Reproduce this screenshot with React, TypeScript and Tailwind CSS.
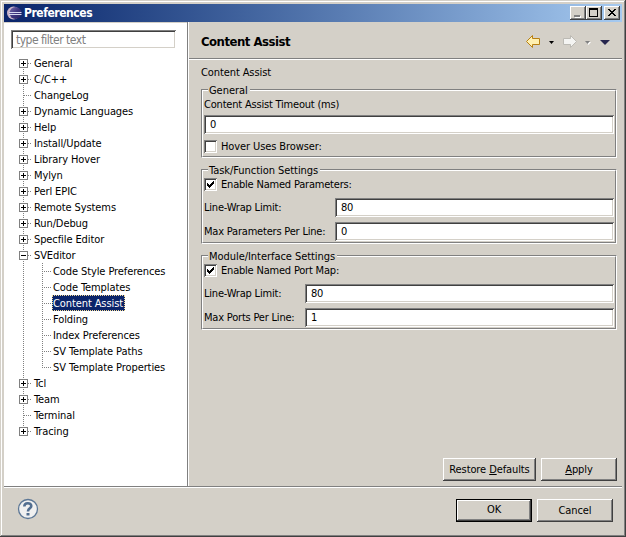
import type { ReactNode } from "react";

const raised =
  "bg-[#d4d0c8] shadow-[inset_-1px_-1px_#404040,inset_1px_1px_#ffffff,inset_-2px_-2px_#808080]";
const sunken =
  "bg-white shadow-[inset_1px_1px_#808080,inset_-1px_-1px_#ffffff,inset_2px_2px_#404040,inset_-2px_-2px_#d4d0c8]";

type Node = { label: string; state?: "plus" | "minus"; child?: boolean; selected?: boolean };

const nodes: Node[] = [
  { label: "General", state: "plus" },
  { label: "C/C++", state: "plus" },
  { label: "ChangeLog" },
  { label: "Dynamic Languages", state: "plus" },
  { label: "Help", state: "plus" },
  { label: "Install/Update", state: "plus" },
  { label: "Library Hover", state: "plus" },
  { label: "Mylyn", state: "plus" },
  { label: "Perl EPIC", state: "plus" },
  { label: "Remote Systems", state: "plus" },
  { label: "Run/Debug", state: "plus" },
  { label: "Specfile Editor", state: "plus" },
  { label: "SVEditor", state: "minus" },
  { label: "Code Style Preferences", child: true },
  { label: "Code Templates", child: true },
  { label: "Content Assist", child: true, selected: true },
  { label: "Folding", child: true },
  { label: "Index Preferences", child: true },
  { label: "SV Template Paths", child: true },
  { label: "SV Template Properties", child: true },
  { label: "Tcl", state: "plus" },
  { label: "Team", state: "plus" },
  { label: "Terminal" },
  { label: "Tracing", state: "plus" },
];

function Branch({ node, first, last, lastChild }: { node: Node; first: boolean; last: boolean; lastChild: boolean }) {
  return (
    <svg width={node.child ? 33 : 15} height="16" className="shrink-0" shapeRendering="crispEdges" stroke="#808080" fill="none">
      <path d={`M4.500 ${first ? 8 : 0}V${last ? 8 : 16}`} strokeDasharray="1 1" />
      {node.child ? (
        <path d={`M23.500 0V${lastChild ? 9 : 16}M23 8.500H32`} strokeDasharray="1 1" />
      ) : (
        <path d="M5 8.500H13" strokeDasharray="1 1" />
      )}
      {node.state && <rect x="0.5" y="4.5" width="8" height="8" fill="#fff" />}
      {node.state && <path d={node.state === "plus" ? "M2 8.500H7M4.500 6V11" : "M2 8.500H7"} stroke="#000" />}
    </svg>
  );
}

function Field({ value, className = "" }: { value: string; className?: string }) {
  return <div className={`flex h-[19px] items-center pt-[2px] pl-[6px] ${sunken} ${className}`}>{value}</div>;
}

function Check({ label, on = false }: { label: string; on?: boolean }) {
  return (
    <div className="flex h-[13px] items-center gap-[4px]">
      <span className={`h-[13px] w-[13px] ${sunken}`}>
        {on && (
          <svg width="13" height="13" shapeRendering="crispEdges">
            <path d="M3 5h1v1h1v1h1v-1h1v-1h1v-1h1v-1h1v3h-1v1h-1v1h-1v1h-1v1h-1v-1h-1v-1h-1z" />
          </svg>
        )}
      </span>
      <span className="pt-[2px]">{label}</span>
    </div>
  );
}

function Row({ label, value, labelWidth }: { label: string; value: string; labelWidth: string }) {
  return (
    <div className="flex items-center">
      <span className={`pt-[2px] ${labelWidth}`}>{label}</span>
      <Field value={value} className="flex-1" />
    </div>
  );
}

function Group({ title, className = "", children }: { title: string; className?: string; children: ReactNode }) {
  return (
    <section className={`relative w-[416px] border border-t-[#808080] border-l-[#808080] border-r-white border-b-white ${className}`}>
      <div className="h-full border border-t-white border-l-white border-r-[#808080] border-b-[#808080] pr-px pl-px tracking-[-0.2px]">
        {children}
      </div>
      <h3 className="absolute -top-[6px] left-[6px] h-[14px] bg-[#d4d0c8] pr-[2px] pl-px leading-[14px] tracking-[-0.05px]">{title}</h3>
    </section>
  );
}

function Button({ children, primary = false, className = "" }: { children: ReactNode; primary?: boolean; className?: string }) {
  return (
    <button className={`h-[23px] ${primary ? "border border-black" : "pt-px"} ${raised} ${className}`}>{children}</button>
  );
}

export default function App() {
  return (
    <div className="flex h-[537px] w-[626px] flex-col bg-[#d4d0c8] p-[4px] font-['DejaVu_Sans_Condensed','DejaVu_Sans',sans-serif] text-[11px] tracking-[-0.1px] whitespace-nowrap text-black shadow-[inset_-1px_-1px_#404040,inset_1px_1px_#d4d0c8,inset_-2px_-2px_#808080,inset_2px_2px_#ffffff]">
      <header className="flex h-[18px] shrink-0 items-center bg-linear-to-r from-[#0a246a] to-[#a6caf0] pr-[2px] pl-[3px]">
        <svg width="15" height="14" viewBox="0 0 15 14">
          <defs>
            <linearGradient id="sphere" x1="0" y1="0" x2="1" y2="1">
              <stop offset="0" stopColor="#7a70ae" />
              <stop offset="0.5" stopColor="#3d3580" />
              <stop offset="1" stopColor="#262260" />
            </linearGradient>
          </defs>
          <circle cx="6.500" cy="7" r="6.500" fill="#c9b3c8" />
          <circle cx="8.500" cy="7" r="6" fill="url(#sphere)" />
          <path d="M2 6.500H14.500M2 8.500H14.500" stroke="#d5d9f0" />
        </svg>
        <h1 className="ml-[2px] flex-1 text-[12px] font-bold tracking-[-0.45px] text-white">Preferences</h1>
        <div className="flex">
          <span className={`h-[14px] w-[16px] ${raised}`}>
            <svg width="16" height="14" shapeRendering="crispEdges"><path d="M5 10h6v2h-6z" fill="#fff" /><path d="M4 9h6v2h-6z" fill="#808080" /></svg>
          </span>
          <span className={`h-[14px] w-[16px] ${raised}`}>
            <svg width="16" height="14" shapeRendering="crispEdges"><path d="M3 2h9v9h-9zM4 4v6h7v-6z" fillRule="evenodd" /></svg>
          </span>
          <span className={`ml-[2px] h-[14px] w-[16px] ${raised}`}>
            <svg width="16" height="14" shapeRendering="crispEdges"><path d="M4 3h2v1h1v1h2v-1h1v-1h2v1h-1v1h-1v1h-1v1h1v1h1v1h1v1h-2v-1h-1v-1h-2v1h-1v1h-2v-1h1v-1h1v-1h1v-1h-1v-1h-1v-1h-1z" /></svg>
          </span>
        </div>
      </header>

      <main className="flex h-[464px] shrink-0">
        <aside className="w-[183px] border-t border-[#d4d0c8] bg-white pt-[7px]">
          <div className={`ml-[7px] flex h-[19px] w-[165px] items-center pt-px pl-[5px] text-[12px] tracking-[-0.5px] text-[#808080] ${sunken}`}>type filter text</div>
          <ul className="mt-[6px] ml-[15px]">
            {nodes.map((node, i) => (
              <li key={node.label} className="flex h-[16px] items-center">
                <Branch node={node} first={i === 0} last={i === nodes.length - 1} lastChild={!!node.child && !nodes[i + 1].child} />
                <span className={node.selected ? "h-[16px] bg-[#0a246a] pr-[2px] pl-px leading-[17px] text-white outline-1 -outline-offset-1 outline-dotted outline-[#f5db95]" : node.child ? "pt-[2px] pl-px" : "pt-[2px]"}>
                  {node.label}
                </span>
              </li>
            ))}
          </ul>
        </aside>
        <div className="w-[2px] border-r border-l border-r-white border-l-[#808080]" />
        <section className="flex flex-1 flex-col">
          <div className="flex h-[38px] shrink-0 items-center border-b border-white pl-[12px] shadow-[inset_0_-1px_#808080]">
            <h2 className="flex-1 pt-[3px] text-[13px] font-bold tracking-[-0.5px]">Content Assist</h2>
            <svg width="97" height="16" className="mt-[3px]">
              <path d="M1.500 7.500L7.500 1.500V4.500H14.500V10.500H7.500V13.500Z" fill="#fff0b0" stroke="#b88012" strokeLinejoin="round" />
              <path d="M24 7h5l-2.500 3z" />
              <path d="M51.500 7.500L45.500 1.500V4.500H38.500V10.500H45.500V13.500Z" fill="#f4f4f2" stroke="#bcbab4" strokeLinejoin="round" />
              <path d="M61 8h5l-2.500 3z" fill="#fff" />
              <path d="M60 7h5l-2.500 3z" fill="#808080" />
              <path d="M75 6h10l-5 5z" fill="#26264e" />
            </svg>
          </div>
          <div className="flex flex-1 flex-col pl-[12px]">
            <p className="mt-[6px] h-[13px] leading-[14px]">Content Assist</p>
            <Group title="General" className="mt-[10px] h-[69px]">
              <p className="mt-[7px] h-[13px] leading-[14px]">Content Assist Timeout (ms)</p>
              <Field value="0" className="mt-[4px]" />
              <div className="mt-[6px] tracking-[-0.1px]"><Check label="Hover Uses Browser:" /></div>
            </Group>
            <Group title="Task/Function Settings" className="mt-[11px] h-[75px]">
              <div className="mt-[7px] mb-[7px]"><Check label="Enable Named Parameters:" on /></div>
              <div className="flex flex-col gap-[5px]">
                <Row label="Line-Wrap Limit:" value="80" labelWidth="w-[131px]" />
                <Row label="Max Parameters Per Line:" value="0" labelWidth="w-[131px]" />
              </div>
            </Group>
            <Group title="Module/Interface Settings" className="mt-[11px] h-[75px]">
              <div className="mt-[7px] mb-[7px]"><Check label="Enable Named Port Map:" on /></div>
              <div className="flex flex-col gap-[5px]">
                <Row label="Line-Wrap Limit:" value="80" labelWidth="w-[101px]" />
                <Row label="Max Ports Per Line:" value="1" labelWidth="w-[101px]" />
              </div>
            </Group>
            <div className="mt-auto mr-[5px] mb-[5px] flex justify-end gap-[5px]">
              <Button className="w-[93px]">Restore <u>D</u>efaults</Button>
              <Button className="w-[76px]"><u>A</u>pply</Button>
            </div>
          </div>
        </section>
      </main>

      <footer className="flex flex-1 items-start border-t border-[#808080] pr-[9px] pl-[13px] shadow-[inset_0_1px_#fff]">
        <svg width="22" height="22" className="mt-[11px]" fill="none">
          <circle cx="11" cy="11" r="9.500" fill="#f0f0f0" stroke="#5c7796" strokeWidth="1.300" />
          <path d="M7.300 8.500C7.300 4.200 14.300 4.200 14.300 8C14.300 10.500 11 10 11 13.500" stroke="#526e90" strokeWidth="2.600" />
          <path d="M9.500 15h3v2.500h-3z" fill="#526e90" />
        </svg>
        <div className="mt-[12px] ml-auto flex gap-[5px]">
          <Button primary className="w-[76px]">OK</Button>
          <Button className="w-[76px]">Cancel</Button>
        </div>
      </footer>
    </div>
  );
}
